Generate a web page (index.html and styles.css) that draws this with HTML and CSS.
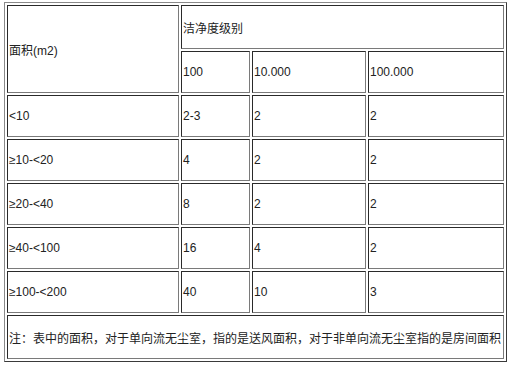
FILE: index.html
```html
<!DOCTYPE html>
<html lang="zh">
<head>
<meta charset="utf-8">
<link rel="stylesheet" href="styles.css">
</head>
<body>
<table class="grid">
  <colgroup>
    <col class="c1"><col class="c2"><col class="c3"><col class="c4">
  </colgroup>
  <tr class="tall">
    <td rowspan="2">面积(m2)</td>
    <td colspan="3">洁净度级别</td>
  </tr>
  <tr>
    <td>100</td><td>10.000</td><td>100.000</td>
  </tr>
  <tr><td>&lt;10</td><td>2-3</td><td>2</td><td>2</td></tr>
  <tr><td>≥10-&lt;20</td><td>4</td><td>2</td><td>2</td></tr>
  <tr><td>≥20-&lt;40</td><td>8</td><td>2</td><td>2</td></tr>
  <tr><td>≥40-&lt;100</td><td>16</td><td>4</td><td>2</td></tr>
  <tr><td>≥100-&lt;200</td><td>40</td><td>10</td><td>3</td></tr>
  <tr class="tall"><td colspan="4">注：表中的面积，对于单向流无尘室，指的是送风面积，对于非单向流无尘室指的是房间面积</td></tr>
</table>
</body>
</html>
```

FILE: styles.css
```css
html, body {
  margin: 0;
  padding: 0;
  background: #fff;
}
body {
  padding: 2px 0 0 4px;
  font-family: "Liberation Sans", "Noto Sans CJK SC", sans-serif;
  font-size: 12px;
  color: #222;
}
.grid {
  table-layout: fixed;
  width: 503px;
  border-collapse: separate;
  border-spacing: 2px;
  border: 1px solid;
  border-color: #8a8a8a #3a3a3a #3a3a3a #8a8a8a;
}
.c1 { width: 172px; }
.c2 { width: 69px; }
.c3 { width: 114px; }
.c4 { width: 136px; }
.grid td {
  box-sizing: border-box;
  height: 42px;
  padding: 1px;
  border: 1px solid;
  border-color: #2a2a2a #7a7a7a #7a7a7a #2a2a2a;
  vertical-align: middle;
  text-align: left;
  white-space: nowrap;
  overflow: hidden;
}
.grid .tall td {
  height: 44px;
}
```
